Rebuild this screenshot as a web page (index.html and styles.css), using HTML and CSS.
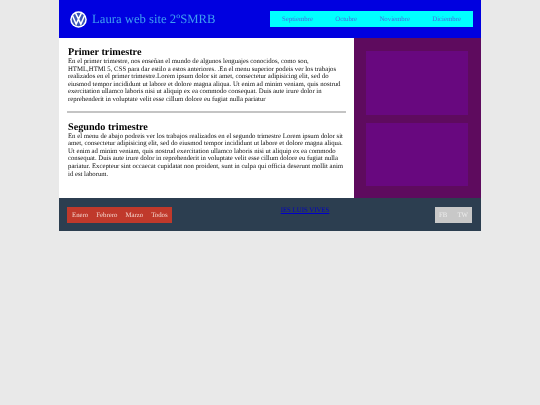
FILE: index.html
```html
<!DOCTYPE html>
<html lang="es">
<head>
    <meta charset="UTF-8">
    <title>Laura web site</title>
    <link rel="stylesheet" href="styles.css">
</head>
<body>
    <div class="wrapper">
        <header class="top">
            <div class="brand">
                <svg class="logo" viewBox="0 0 40 40">
                    <circle cx="20" cy="20" r="19.5" fill="#fff"/>
                    <circle cx="20" cy="20" r="16" fill="#3a55b8"/>
                    <path d="M6 11 L14.5 31 L20 19 L25.5 31 L34 11 M13 5 L20 19 L27 5" fill="none" stroke="#fff" stroke-width="3.6"/>
                </svg>
                <h1>Laura web site 2ºSMRB</h1>
            </div>
            <nav class="months">
                <a>Septiembre</a>
                <a>Octubre</a>
                <a>Noviembre</a>
                <a>Diciembre</a>
            </nav>
        </header>
        <div class="middle">
            <main class="content">
                <h2>Primer trimestre</h2>
                <p>En el primer trimestre, nos enseñan el mundo de algunos lenguajes conocidos, como son, HTML,HTMl 5, CSS para dar estilo a estos anteriores. .En el menu superior podeis ver los trabajos realizados en el primer trimestre.Lorem ipsum dolor sit amet, consectetur adipisicing elit, sed do eiusmod tempor incididunt ut labore et dolore magna aliqua. Ut enim ad minim veniam, quis nostrud exercitation ullamco laboris nisi ut aliquip ex ea commodo consequat. Duis aute irure dolor in reprehenderit in voluptate velit esse cillum dolore eu fugiat nulla pariatur</p>
                <hr>
                <h2>Segundo trimestre</h2>
                <p>En el menu de abajo podreis ver los trabajos realizados en el segundo trimestre Lorem ipsum dolor sit amet, consectetur adipisicing elit, sed do eiusmod tempor incididunt ut labore et dolore magna aliqua. Ut enim ad minim veniam, quis nostrud exercitation ullamco laboris nisi ut aliquip ex ea commodo consequat. Duis aute irure dolor in reprehenderit in voluptate velit esse cillum dolore eu fugiat nulla pariatur. Excepteur sint occaecat cupidatat non proident, sunt in culpa qui officia deserunt mollit anim id est laborum.</p>
            </main>
            <aside class="side">
                <div class="side-box"></div>
                <div class="side-box"></div>
            </aside>
        </div>
        <footer class="bottom">
            <nav class="terms">
                <a>Enero</a>
                <a>Febrero</a>
                <a>Marzo</a>
                <a>Todos</a>
            </nav>
            <a class="school" href="#">IES LUIS VIVES</a>
            <div class="social">
                <a>FB</a>
                <a>TW</a>
            </div>
        </footer>
    </div>
</body>
</html>
```

FILE: styles.css
```css
body {
    margin: 0;
    background-color: #e9e9e9;
    font-family: "Liberation Serif", serif;
    text-rendering: geometricPrecision;
}
.wrapper {
    width: 422px;
    margin-left: 59px;
    filter: blur(0.25px);
}
.top {
    height: 38px;
    background-color: #0000e0;
    display: flex;
    align-items: center;
    justify-content: space-between;
    padding: 0 8px 0 11px;
    box-sizing: border-box;
}
.brand {
    display: flex;
    align-items: center;
    gap: 5px;
}
.logo {
    width: 17px;
    height: 17px;
}
.brand h1 {
    margin: 0;
    font-size: 12.7px;
    font-weight: normal;
    color: #3fa0f0;
}
.months {
    width: 203px;
    height: 16px;
    background-color: #00ffff;
    display: flex;
    align-items: center;
    justify-content: space-between;
    padding: 0 12px;
    box-sizing: border-box;
    font-size: 6.8px;
    color: #4a68e0;
}
.middle {
    display: flex;
    height: 160px;
}
.content {
    width: 295px;
    background-color: #fff;
    padding: 9px 8px 0 9px;
    box-sizing: border-box;
}
.content h2 {
    margin: 0;
    font-size: 10.2px;
    line-height: 11px;
    color: #000;
}
.content p {
    margin: 0;
    font-size: 6.75px;
    line-height: 7.6px;
    color: #111;
}
.content hr {
    height: 2px;
    margin: 7px 0 9px -1px;
    border: 0;
    background-color: #c4c4c4;
}
.side {
    flex: 1;
    background-color: #5e0b5e;
    padding: 13px 13px 12px 12px;
    display: flex;
    flex-direction: column;
    gap: 8px;
}
.side-box {
    flex: 1;
    background-color: #68087f;
}
.bottom {
    height: 33px;
    background-color: #2c3e50;
    display: flex;
    justify-content: space-between;
    align-items: flex-start;
    padding: 9px 9px 0 8px;
    box-sizing: border-box;
    font-size: 6.8px;
}
.terms {
    width: 105px;
    height: 16px;
    background-color: #c0392b;
    display: flex;
    align-items: center;
    gap: 8px;
    padding-left: 5px;
    box-sizing: border-box;
    color: #f4d4cc;
}
.school {
    margin-left: 3px;
    color: #0000c8;
}
.social {
    width: 37px;
    height: 16px;
    background-color: #c8c8c8;
    display: flex;
    align-items: center;
    justify-content: space-between;
    padding: 0 4px;
    box-sizing: border-box;
    color: #eee;
}
```
